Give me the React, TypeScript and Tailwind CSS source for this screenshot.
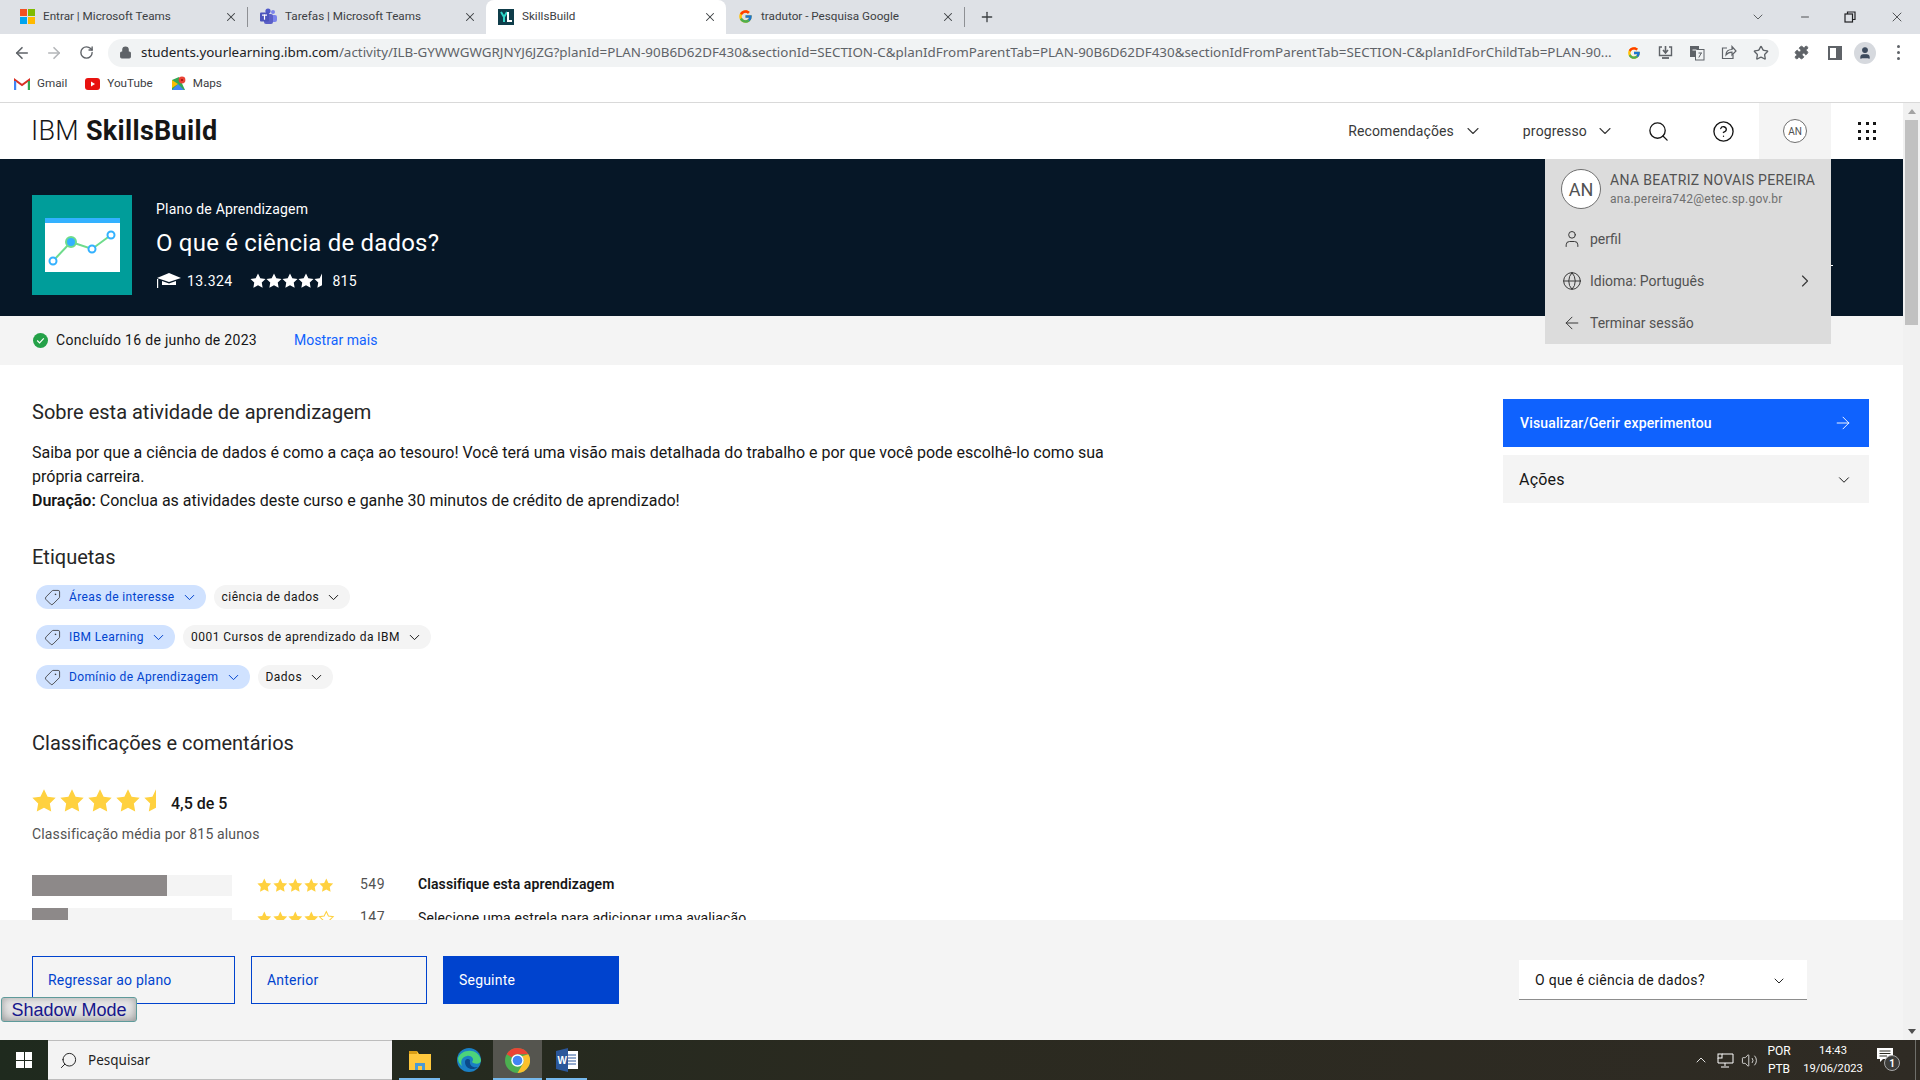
import React from "react";
import { ChevronDown, ChevronRight, ArrowRight, ArrowLeft, Search, CircleHelp, User, Globe, Tag, X, Plus, RotateCw, Lock, Star as StarIcon, Puzzle, Minus, ChevronUp, Volume2 } from "lucide-react";
import { FcGoogle } from "react-icons/fc";

const plex = "font-['Roboto',sans-serif]";
const STAR = "12,2 15.09,8.26 22,9.27 17,14.14 18.18,21.02 12,17.77 5.82,21.02 7,14.14 2,9.27 8.91,8.26";
const HALF = "12,2 12,17.77 5.82,21.02 7,14.14 2,9.27 8.91,8.26";

function Stars({ size, color, full, half, empty = 0, overlap = 0 }: { size: number; color: string; full: number; half?: boolean; empty?: number; overlap?: number }) {
  const count = full + (half ? 1 : 0) + empty;
  return (
    <span className="flex items-center">
      {Array.from({ length: count }).map((_, i) => {
        const kind = i < full ? "full" : half && i === full ? "half" : "empty";
        return (
          <svg key={i} width={size} height={size} viewBox="0 0 24 24" style={{ marginLeft: i === 0 ? 0 : -overlap }}>
            {kind === "full" && <polygon points={STAR} fill={color} />}
            {kind === "half" && <polygon points={HALF} fill={color} />}
            {kind === "empty" && <polygon points={STAR} fill="none" stroke={color} strokeWidth="1.5" />}
          </svg>
        );
      })}
    </span>
  );
}

function MsLogo() {
  return (
    <span className="grid grid-cols-2 gap-[1px] w-[15px] h-[15px] shrink-0">
      <span className="bg-[#f25022]" /><span className="bg-[#7fba00]" /><span className="bg-[#00a4ef]" /><span className="bg-[#ffb900]" />
    </span>
  );
}
function TeamsLogo() {
  return (
    <svg width="17" height="17" viewBox="0 0 17 17" className="shrink-0">
      <circle cx="13" cy="4" r="2" fill="#7b83eb" /><rect x="10" y="7" width="7" height="7" rx="2" fill="#7b83eb" />
      <circle cx="8" cy="3" r="2.6" fill="#5059c9" /><rect x="4" y="6" width="9" height="10" rx="2" fill="#5b5fc7" />
      <rect x="0" y="4.5" width="9" height="9" rx="1" fill="#4b53bc" />
      <rect x="2" y="6.5" width="5" height="1.2" fill="#fff" /><rect x="3.9" y="6.5" width="1.2" height="5.2" fill="#fff" />
    </svg>
  );
}
function SbLogo() {
  return (
    <svg width="16" height="16" viewBox="0 0 16 16" className="shrink-0">
      <rect width="16" height="16" fill="#0f3d4a" />
      <path d="M3 3 L6 8 L6 13 M9 3 L6 8" stroke="#2fd6c8" strokeWidth="2" fill="none" />
      <path d="M10 3 V12 H14" stroke="#ffffff" strokeWidth="2" fill="none" />
    </svg>
  );
}

function BrowserTab({ icon, label, active, w }: { icon: React.ReactNode; label: string; active?: boolean; w: string }) {
  return (
    <div className={`flex items-center h-[34px] ${w} ${active ? "bg-white rounded-t-[8px]" : ""}`}>
      <span className="flex-1 flex items-center gap-[8px] pl-[12px] min-w-0">
        {icon}
        <span className="text-[11.7px] text-[#3c4043] whitespace-nowrap">{label}</span>
      </span>
      <X size={14} strokeWidth={1.8} className="text-[#3c4043] mr-[9px] shrink-0" />
    </div>
  );
}

function TabStrip() {
  return (
    <div className="h-[34px] bg-[#dee1e6] flex items-center shrink-0">
      <div className="w-[8px]" />
      <BrowserTab w="w-[239px]" label="Entrar | Microsoft Teams" icon={<MsLogo />} />
      <div className="w-[1px] h-[20px] bg-[#8e9094]" />
      <BrowserTab w="w-[238px]" label="Tarefas | Microsoft Teams" icon={<TeamsLogo />} />
      <BrowserTab w="w-[240px]" label="SkillsBuild" active icon={<SbLogo />} />
      <BrowserTab w="w-[238px]" label="tradutor - Pesquisa Google" icon={<FcGoogle size={15} className="shrink-0" />} />
      <div className="w-[1px] h-[20px] bg-[#8e9094]" />
      <Plus size={16} strokeWidth={2} className="ml-[14px] text-[#3c4043]" />
      <div className="flex-1" />
      <ChevronDown size={16} strokeWidth={1.2} className="text-[#3c4043] mr-[33px]" />
      <Minus size={12} strokeWidth={1.5} className="text-[#202124] mr-[33px]" />
      <svg width="12" height="12" viewBox="0 0 12 12" className="mr-[33px]"><rect x="1" y="3" width="7.5" height="8" fill="none" stroke="#202124" strokeWidth="1.2" /><path d="M3.5 3 V1 H11 V8.5 H8.5" fill="none" stroke="#202124" strokeWidth="1.2" /></svg>
      <X size={16} strokeWidth={1.1} className="text-[#202124] mr-[15px]" />
    </div>
  );
}

function Toolbar() {
  return (
    <div className="h-[34px] bg-white flex items-center shrink-0 pt-[3px]">
      <ArrowLeft size={18} strokeWidth={2.2} className="ml-[13px] text-[#5f6368]" />
      <ArrowRight size={18} strokeWidth={2.2} className="ml-[14px] text-[#b4b6b9]" />
      <RotateCw size={15} strokeWidth={2.2} className="ml-[16px] text-[#5f6368]" />
      <div className="ml-[14px] w-[1671px] h-[28px] rounded-full bg-[#f1f3f4] flex items-center">
        <Lock size={13} strokeWidth={2} fill="currentColor" className="ml-[11px] text-[#5f6368]" />
        <span className="ml-[9px] text-[13.4px] whitespace-nowrap text-[#5f6368] font-['Noto_Sans',sans-serif] w-[1472px]">
          <span className="text-[#202124]">students.yourlearning.ibm.com</span>/activity/ILB-GYWWGWGRJNYJ6JZG?planId=PLAN-90B6D62DF430&amp;sectionId=SECTION-C&amp;planIdFromParentTab=PLAN-90B6D62DF430&amp;sectionIdFromParentTab=SECTION-C&amp;planIdForChildTab=PLAN-90...
        </span>
        <FcGoogle size={14} className="ml-[14px] shrink-0" />
        <svg width="15" height="15" viewBox="0 0 15 15" className="ml-[17px] shrink-0"><path d="M4 2 H1.5 V10.5 H13.5 V2 H11" fill="none" stroke="#5f6368" strokeWidth="1.4" /><path d="M7.5 1 V7 M5 5 L7.5 8 L10 5" fill="none" stroke="#5f6368" strokeWidth="1.6" /><path d="M4 13 H11" stroke="#5f6368" strokeWidth="1.8" /></svg>
        <svg width="16" height="16" viewBox="0 0 16 16" className="ml-[16px] shrink-0"><rect x="1" y="1" width="9" height="11" fill="#5f6368" /><rect x="6.5" y="4.5" width="8.5" height="10.5" fill="#f1f3f4" stroke="#5f6368" /><path d="M3.5 5 H7.5" stroke="#f1f3f4" /><path d="M9.5 8 H13 M9.8 12.5 L12.3 8" stroke="#5f6368" /></svg>
        <svg width="16" height="15" viewBox="0 0 16 15" className="ml-[16px] shrink-0"><path d="M6 3 H1.5 V13.5 H12 V9.5" fill="none" stroke="#5f6368" strokeWidth="1.2" /><path d="M5 10 C5 6 8 4.5 11 4.5 V1.5 L15 6 L11 10 V7.2 C8.5 7.2 6.5 8 5 10 Z" fill="none" stroke="#5f6368" strokeWidth="1.2" /></svg>
        <StarIcon size={16} strokeWidth={2} className="ml-[16px] text-[#5f6368]" />
      </div>
      <Puzzle size={15} fill="#5f6368" strokeWidth={1.5} className="ml-[15px] text-[#5f6368]" />
      <svg width="14" height="14" viewBox="0 0 14 14" className="ml-[19px]"><rect x="1" y="1" width="12" height="12" fill="none" stroke="#5f6368" strokeWidth="2" /><rect x="8" y="1" width="5" height="12" fill="#5f6368" /></svg>
      <span className="ml-[12px] w-[22px] h-[22px] rounded-full bg-[#d6d9de] flex items-center justify-center">
        <User size={14} fill="#3c4a5c" className="text-[#3c4a5c]" />
      </span>
      <span className="ml-[21px] flex flex-col gap-[3px]">
        <span className="w-[3px] h-[3px] rounded-full bg-[#5f6368]" /><span className="w-[3px] h-[3px] rounded-full bg-[#5f6368]" /><span className="w-[3px] h-[3px] rounded-full bg-[#5f6368]" />
      </span>
    </div>
  );
}

function Bookmark({ icon, label }: { icon: React.ReactNode; label: string }) {
  return (
    <span className="flex items-center gap-[7px]">
      {icon}
      <span className="text-[11.7px] text-[#3c4043]">{label}</span>
    </span>
  );
}

function Bookmarks() {
  return (
    <div className="h-[35px] bg-white flex items-center gap-[18px] pl-[14px] pb-[2px] border-b border-[#d9d9d9] shrink-0">
      <Bookmark label="Gmail" icon={
        <svg width="16" height="12" viewBox="0 0 16 12"><path d="M1 12 V2 L8 7 L15 2 V12" fill="none" stroke="#d93025" strokeWidth="2" /><path d="M1 12 V3" stroke="#4285f4" strokeWidth="2.4" /><path d="M15 12 V3" stroke="#34a853" strokeWidth="2.4" /></svg>} />
      <Bookmark label="YouTube" icon={
        <svg width="15" height="12" viewBox="0 0 15 12"><rect width="15" height="12" rx="3" fill="#e8120f" /><polygon points="6,3.5 10,6 6,8.5" fill="#fff" /></svg>} />
      <Bookmark label="Maps" icon={
        <svg width="15" height="15" viewBox="0 0 15 15"><polygon points="1,4 8,1 14,14 1,14" fill="#34a853" /><polygon points="1,14 7,8 13,14" fill="#4285f4" /><polygon points="1,4 7,8 1,12" fill="#fbbc04" /><circle cx="11" cy="4" r="3.4" fill="#ea4335" /><circle cx="11" cy="4" r="1.1" fill="#a50e0e" /></svg>} />
    </div>
  );
}

function Header() {
  return (
    <div className="h-[56px] bg-white flex items-center shrink-0 pl-[31px] text-[#161616]">
      <span className="text-[27px] leading-none whitespace-nowrap tracking-[0.3px]"><span className="font-light">IBM </span><span className="font-bold">SkillsBuild</span></span>
      <div className="flex-1" />
      <span className="text-[14px] text-[#393939] tracking-[0.1px]">Recomendações</span>
      <ChevronDown size={20} strokeWidth={1.3} className="ml-[9px] text-[#393939]" />
      <span className="ml-[40px] text-[14px] text-[#393939] tracking-[0.15px]">progresso</span>
      <ChevronDown size={20} strokeWidth={1.3} className="ml-[8px] text-[#393939]" />
      <Search size={23} strokeWidth={1.4} className="ml-[32px]" />
      <CircleHelp size={23} strokeWidth={1.4} className="ml-[42px]" />
      <div className="ml-[24px] w-[72px] h-full bg-[#f4f4f4] flex items-center justify-center">
        <span className="w-[24px] h-[24px] rounded-full border border-[#6f6f6f] bg-white flex items-center justify-center text-[10px] text-[#525252]">AN</span>
      </div>
      <div className="ml-[27px] grid grid-cols-3 gap-[4.5px]">
        {Array.from({ length: 9 }).map((_, i) => <span key={i} className="w-[3px] h-[3px] bg-[#161616]" />)}
      </div>
      <div className="w-[27px]" />
    </div>
  );
}

function Hero() {
  return (
    <div className="h-[157px] bg-[#061727] shrink-0 flex items-start pt-[36px] pl-[32px] text-white">
      <div className="w-[100px] h-[100px] bg-[#009d9a] flex items-center justify-center">
        <svg width="75" height="54" viewBox="0 0 75 54">
          <rect width="75" height="54" fill="#fff" />
          <rect width="75" height="5" fill="#33b1ff" />
          <polyline points="8,43 26,24 47,31 66,17" fill="none" stroke="#6fdc8c" strokeWidth="2" />
          <circle cx="8" cy="43" r="3.5" fill="#fff" stroke="#33b1ff" strokeWidth="2" />
          <circle cx="26" cy="24" r="5" fill="#33b1ff" stroke="#6fdc8c" strokeWidth="2" />
          <circle cx="47" cy="31" r="3.5" fill="#fff" stroke="#33b1ff" strokeWidth="2" />
          <circle cx="66" cy="17" r="3.5" fill="#fff" stroke="#33b1ff" strokeWidth="2" />
        </svg>
      </div>
      <div className="ml-[24px] mt-[4px] flex flex-col">
        <span className="text-[14px] leading-[20px] tracking-[0.2px]">Plano de Aprendizagem</span>
        <span className="mt-[8px] text-[24px] leading-[32px] tracking-[0.2px]">O que é ciência de dados?</span>
        <span className="mt-[11px] flex items-center h-[22px]">
          <svg width="26" height="18" viewBox="0 0 26 18"><polygon points="13,1 25,6 13,10 1,6" fill="#fff" /><path d="M6 9 L13 11.5 L20 9 V13 H6 Z" fill="#fff" /><rect x="1" y="7" width="1.2" height="9" fill="#fff" /></svg>
          <span className="ml-[5px] text-[14px] tracking-[0.4px]">13.324</span>
          <span className="ml-[17px]"><Stars size={18} color="#fff" full={4} half overlap={2} /></span>
          <span className="ml-[1px] text-[14px] tracking-[0.3px]">815</span>
        </span>
      </div>
    </div>
  );
}

function Strip() {
  return (
    <div className="h-[49px] bg-[#f4f4f4] shrink-0 flex items-center pl-[33px] text-[14px] text-[#161616]">
      <svg width="15" height="15" viewBox="0 0 16 16"><circle cx="8" cy="8" r="8" fill="#24a148" /><path d="M4.5 8 L7 10.5 L11.5 5.8" fill="none" stroke="#fff" strokeWidth="1.3" /></svg>
      <span className="ml-[8px] tracking-[0.3px]">Concluído 16 de junho de 2023</span>
      <span className="ml-[37px] text-[#0f62fe] tracking-[0.05px]">Mostrar mais</span>
    </div>
  );
}

function Chip({ label, blue }: { label: string; blue?: boolean }) {
  return (
    <span className={`h-[24px] rounded-full flex items-center text-[12px] whitespace-nowrap ${blue ? "bg-[#d0e2ff] text-[#0043ce] pl-[8px] pr-[8px] tracking-[0.37px]" : "bg-[#f4f4f4] text-[#161616] px-[8px] tracking-[0.48px]"}`}>
      {blue && <Tag size={17} strokeWidth={1.2} className="text-[#393939] mr-[8px] -scale-x-100" />}
      {label}
      <ChevronDown size={17} strokeWidth={1.4} className={`ml-[6px] ${blue ? "text-[#0043ce]" : "text-[#161616]"}`} />
    </span>
  );
}

function ChipRow({ a, b }: { a: string; b: string }) {
  return <div className="flex gap-[8px]"><Chip label={a} blue /><Chip label={b} /></div>;
}

function BarRow({ pct, count, full, empty }: { pct: string; count: string; full: number; empty: number }) {
  return (
    <div className="flex items-center h-[21px]">
      <div className="w-[200px] h-full bg-[#f4f4f4]"><div className={`h-full bg-[#8d8989] ${pct}`} /></div>
      <span className="ml-[24px] w-[79px]"><Stars size={17} color="#ffd13f" full={full} empty={empty} overlap={1} /></span>
      <span className="ml-[25px] w-[58px] text-[14px] text-[#525252] tracking-[0.5px] -mt-[2px]">{count}</span>
    </div>
  );
}

function Body() {
  return (
    <div className="flex-1 min-h-0 bg-white overflow-hidden flex pl-[32px] pr-[34px] text-[#161616]">
      <div className="flex-1 min-w-0">
        <h2 className="mt-[33px] text-[20px] leading-[28px] text-[#262626]">Sobre esta atividade de aprendizagem</h2>
        <p className="mt-[15px] w-[1085px] text-[16px] leading-[24px]">
          Saiba por que a ciência de dados é como a caça ao tesouro! Você terá uma visão mais detalhada do trabalho e por que você pode escolhê-lo como sua própria carreira.<br />
          <b className="font-semibold">Duração:</b> Conclua as atividades deste curso e ganhe 30 minutos de crédito de aprendizado!
        </p>
        <h2 className="mt-[30px] text-[20px] leading-[28px] text-[#262626]">Etiquetas</h2>
        <div className="mt-[14px] ml-[4px] flex flex-col gap-[16px]">
          <ChipRow a="Áreas de interesse" b="ciência de dados" />
          <ChipRow a="IBM Learning" b="0001 Cursos de aprendizado da IBM" />
          <ChipRow a="Domínio de Aprendizagem" b="Dados" />
        </div>
        <h2 className="mt-[40px] text-[20px] leading-[28px] text-[#262626]">Classificações e comentários</h2>
        <div className="mt-[32px] flex items-center h-[24px] -ml-[2px]">
          <Stars size={28} color="#ffd13f" full={4} half />
          <span className="ml-[1px] mt-[5px] text-[16px] font-medium">4,5 de 5</span>
        </div>
        <p className="mt-[11px] text-[14px] leading-[20px] text-[#525252] tracking-[0.15px]">Classificação média por 815 alunos</p>
        <div className="mt-[31px] flex">
          <div className="flex flex-col gap-[12px]">
            <BarRow pct="w-[135px]" count="549" full={5} empty={0} />
            <BarRow pct="w-[36px]" count="147" full={4} empty={1} />
          </div>
          <div className="flex flex-col text-[14px] leading-[20px] tracking-[0.1px] -mt-[1px]">
            <span className="font-semibold">Classifique esta aprendizagem</span>
            <span className="mt-[14px]">Selecione uma estrela para adicionar uma avaliação</span>
          </div>
        </div>
      </div>
      <div className="w-[366px] shrink-0 pt-[34px] flex flex-col gap-[8px]">
        <div className="h-[48px] bg-[#0f62fe] text-white flex items-center justify-between pl-[17px] pr-[16px] text-[14px] font-medium tracking-[0.15px]">
          Visualizar/Gerir experimentou
          <ArrowRight size={20} strokeWidth={1.1} />
        </div>
        <div className="h-[48px] bg-[#f4f4f4] flex items-center justify-between pl-[16px] pr-[16px] pt-[2px] text-[16px] tracking-[0.2px]">
          Ações
          <ChevronDown size={18} strokeWidth={1.3} />
        </div>
      </div>
    </div>
  );
}

function BottomBar() {
  return (
    <div className="h-[120px] bg-[#f4f4f4] shrink-0 flex items-start pl-[32px] pr-[96px] pt-[36px] text-[14px] tracking-[0.2px]">
      <div className="w-[203px] h-[48px] border border-[#0043ce] text-[#0043ce] flex items-center pl-[15px]">Regressar ao plano</div>
      <div className="ml-[16px] w-[176px] h-[48px] border border-[#0043ce] text-[#0043ce] flex items-center pl-[15px]">Anterior</div>
      <div className="ml-[16px] w-[176px] h-[48px] bg-[#0043ce] text-white flex items-center pl-[16px]">Seguinte</div>
      <div className="flex-1" />
      <div className="mt-[4px] w-[288px] h-[40px] bg-white border-b border-[#8d8d8d] flex items-center justify-between pl-[16px] pr-[20px] pt-[2px] text-[#161616] tracking-[0.3px]">
        O que é ciência de dados?
        <ChevronDown size={16} strokeWidth={1.4} />
      </div>
    </div>
  );
}

function Scrollbar() {
  return (
    <div className="w-[17px] bg-[#f1f1f1] flex flex-col items-center shrink-0">
      <div className="h-[17px] flex items-center justify-center"><div className="w-0 h-0 border-x-[4px] border-x-transparent border-b-[5px] border-b-[#a3a3a3]" /></div>
      <div className="w-[13px] h-[205px] bg-[#c1c1c1]" />
      <div className="flex-1" />
      <div className="h-[17px] flex items-center justify-center"><div className="w-0 h-0 border-x-[4px] border-x-transparent border-t-[5px] border-t-[#505050]" /></div>
    </div>
  );
}

function UserMenu() {
  return (
    <div className="absolute left-[1545px] top-[56px] w-[286px] h-[185px] bg-[#dcdcdc] text-[#525252] z-10">
      <div className="flex pl-[16px] pt-[10px]">
        <span className="w-[40px] h-[40px] rounded-full border border-[#6f6f6f] bg-white flex items-center justify-center text-[18px]">AN</span>
        <div className="ml-[9px] flex flex-col">
          <span className="text-[14px] leading-[22px] tracking-[0.32px] whitespace-nowrap">ANA BEATRIZ NOVAIS PEREIRA</span>
          <span className="text-[12px] leading-[16px] text-[#6f6f6f] tracking-[0.25px]">ana.pereira742@etec.sp.gov.br</span>
        </div>
      </div>
      <div className="mt-[9px] h-[42px] flex items-center pl-[17px] text-[14px]">
        <User size={20} strokeWidth={1.2} className="text-[#393939]" /><span className="ml-[8px]">perfil</span>
      </div>
      <div className="h-[42px] flex items-center pl-[17px] text-[14px]">
        <Globe size={20} strokeWidth={1.2} className="text-[#393939]" /><span className="ml-[8px]">Idioma: Português</span>
        <span className="flex-1" /><ChevronRight size={20} strokeWidth={1.4} className="mr-[16px] text-[#393939]" />
      </div>
      <div className="h-[42px] flex items-center pl-[17px] text-[14px]">
        <ArrowLeft size={20} strokeWidth={1.2} className="text-[#393939]" /><span className="ml-[8px]">Terminar sessão</span>
      </div>
    </div>
  );
}

function TaskIcon({ children, active, bar }: { children: React.ReactNode; active?: boolean; bar?: boolean }) {
  return (
    <div className={`relative w-[49px] h-[40px] flex items-center justify-center ${active ? "bg-[#55554f]" : ""}`}>
      {children}
      {bar && <span className={`absolute bottom-0 h-[2px] bg-[#76b9ed] ${active ? "left-0 right-0" : "left-[4px] right-[4px]"}`} />}
    </div>
  );
}

function Taskbar() {
  return (
    <div className="h-[40px] shrink-0 bg-linear-to-r from-[#1f2a1e] via-[#2b2a20] to-[#2f2b24] flex items-center text-white">
      <div className="w-[48px] h-full flex items-center justify-center">
        <span className="grid grid-cols-2 gap-[1px] w-[16px] h-[16px]"><span className="bg-white" /><span className="bg-white" /><span className="bg-white" /><span className="bg-white" /></span>
      </div>
      <div className="w-[344px] h-full bg-[#f3f3f3] border-y border-[#bdbdbd] flex items-center pl-[11px] text-[#1f1f1f]">
        <Search size={19} strokeWidth={1.2} className="-scale-x-100" />
        <span className="ml-[10px] text-[13.5px] font-['Noto_Sans',sans-serif]">Pesquisar</span>
      </div>
      <div className="w-[3px]" />
      <TaskIcon bar><svg width="22" height="22" viewBox="0 0 22 22"><path d="M0 2 H8 L10 5 H22 V21 H0 Z" fill="#ffc83d" /><rect y="2" width="8" height="3" fill="#d99e16" /><path d="M6 21 V14 H16 V21 H13 V17 H9 V21 Z" fill="#4a9ad4" /></svg></TaskIcon>
      <TaskIcon><svg width="26" height="26" viewBox="0 0 26 26"><circle cx="13" cy="13" r="12" fill="#1a7fc4" /><path d="M2 11 C5 2 22 0 25 13 C25 18 18 17 16 15 C19 12 15 8 11 9 C6 10 4 14 6 19 C3 17 2 14 2 11" fill="#4cd37a" /><path d="M9 15 C9 22 17 24 22 20 C17 21 13 19 14 13 C12 11 9 12 9 15" fill="#0b4a8a" /></svg></TaskIcon>
      <TaskIcon active bar><svg width="25" height="25" viewBox="0 0 24 24"><circle cx="12" cy="12" r="12" fill="#4caf50" /><path d="M12 0 A12 12 0 0 1 22.4 6 H12 A6 6 0 0 0 6.8 9 L1.6 6 A12 12 0 0 1 12 0" fill="#ea4335" /><path d="M22.4 6 A12 12 0 0 1 12 24 L17.2 15 A6 6 0 0 0 16.2 7.8 Z" fill="#fbc02d" /><circle cx="12" cy="12" r="6" fill="#fff" /><circle cx="12" cy="12" r="4.6" fill="#4285f4" /></svg></TaskIcon>
      <TaskIcon bar><svg width="24" height="24" viewBox="0 0 24 24"><rect x="9" y="3" width="14" height="18" fill="#fff" /><path d="M12 7 H21 M12 10 H21 M12 13 H21 M12 16 H21" stroke="#2b579a" strokeWidth="1" /><polygon points="1,3 13,0 13,24 1,21" fill="#2b579a" /><text x="2.5" y="16" fontSize="10" fontWeight="700" fill="#fff" fontFamily="Liberation Sans">W</text></svg></TaskIcon>
      <div className="flex-1" />
      <ChevronUp size={16} strokeWidth={1.3} className="mr-[8px]" />
      <svg width="17" height="15" viewBox="0 0 17 15" className="mr-[7px]"><path d="M5 1 H16 V10 H1 V5" fill="none" stroke="#fff" /><rect x="1" y="1" width="4" height="4" fill="none" stroke="#fff" /><path d="M8 10 V13 M4 14 H12" stroke="#fff" /></svg>
      <Volume2 size={17} strokeWidth={1.1} className="mr-[9px]" />
      <div className="flex flex-col items-center w-[24px] text-[12px] leading-[18px]"><span>POR</span><span>PTB</span></div>
      <div className="ml-[13px] flex flex-col items-center w-[58px] text-[11.2px] leading-[18px] whitespace-nowrap"><span>14:43</span><span>19/06/2023</span></div>
      <div className="relative ml-[15px] w-[24px] h-[24px]">
        <svg width="16" height="14" viewBox="0 0 16 14"><path d="M0 0 H16 V11 H6 L3 14 V11 H0 Z" fill="#fff" /><path d="M2.5 3 H13.5 M2.5 5.5 H13.5 M2.5 8 H10" stroke="#2b2a20" /></svg>
        <span className="absolute left-[7px] top-[7px] w-[16px] h-[16px] rounded-full bg-[#3d3d3a] border border-[#a8a8a8] flex items-center justify-center text-[10px] font-bold">1</span>
      </div>
      <div className="w-[14px]" />
      <div className="w-[1px] h-full bg-[#6f6f6a]" />
      <div className="w-[4px]" />
    </div>
  );
}

export default function App() {
  return (
    <div className={`w-[1920px] h-[1080px] overflow-hidden flex flex-col bg-white ${plex}`}>
      <TabStrip />
      <Toolbar />
      <Bookmarks />
      <div className="flex-1 min-h-0 flex relative">
        <div className="flex-1 min-w-0 flex flex-col relative">
          <Header />
          <Hero />
          <Strip />
          <Body />
          <BottomBar />
          <UserMenu />
          <span className="absolute left-[1831px] top-[162px] w-[2px] h-[1px] bg-white" />
          <div className="absolute left-[1px] top-[894px] w-[136px] h-[25px] rounded-[3px] border border-[#5e9a9a] bg-linear-to-b from-[#f0f0f0] to-[#d5d5d5] shadow-[inset_0_0_8px_rgba(0,0,0,0.35)] flex items-center justify-center pt-[1px] text-[18px] text-[#16168c] font-['Liberation_Sans',sans-serif] z-20">Shadow Mode</div>
        </div>
        <Scrollbar />
      </div>
      <Taskbar />
    </div>
  );
}
